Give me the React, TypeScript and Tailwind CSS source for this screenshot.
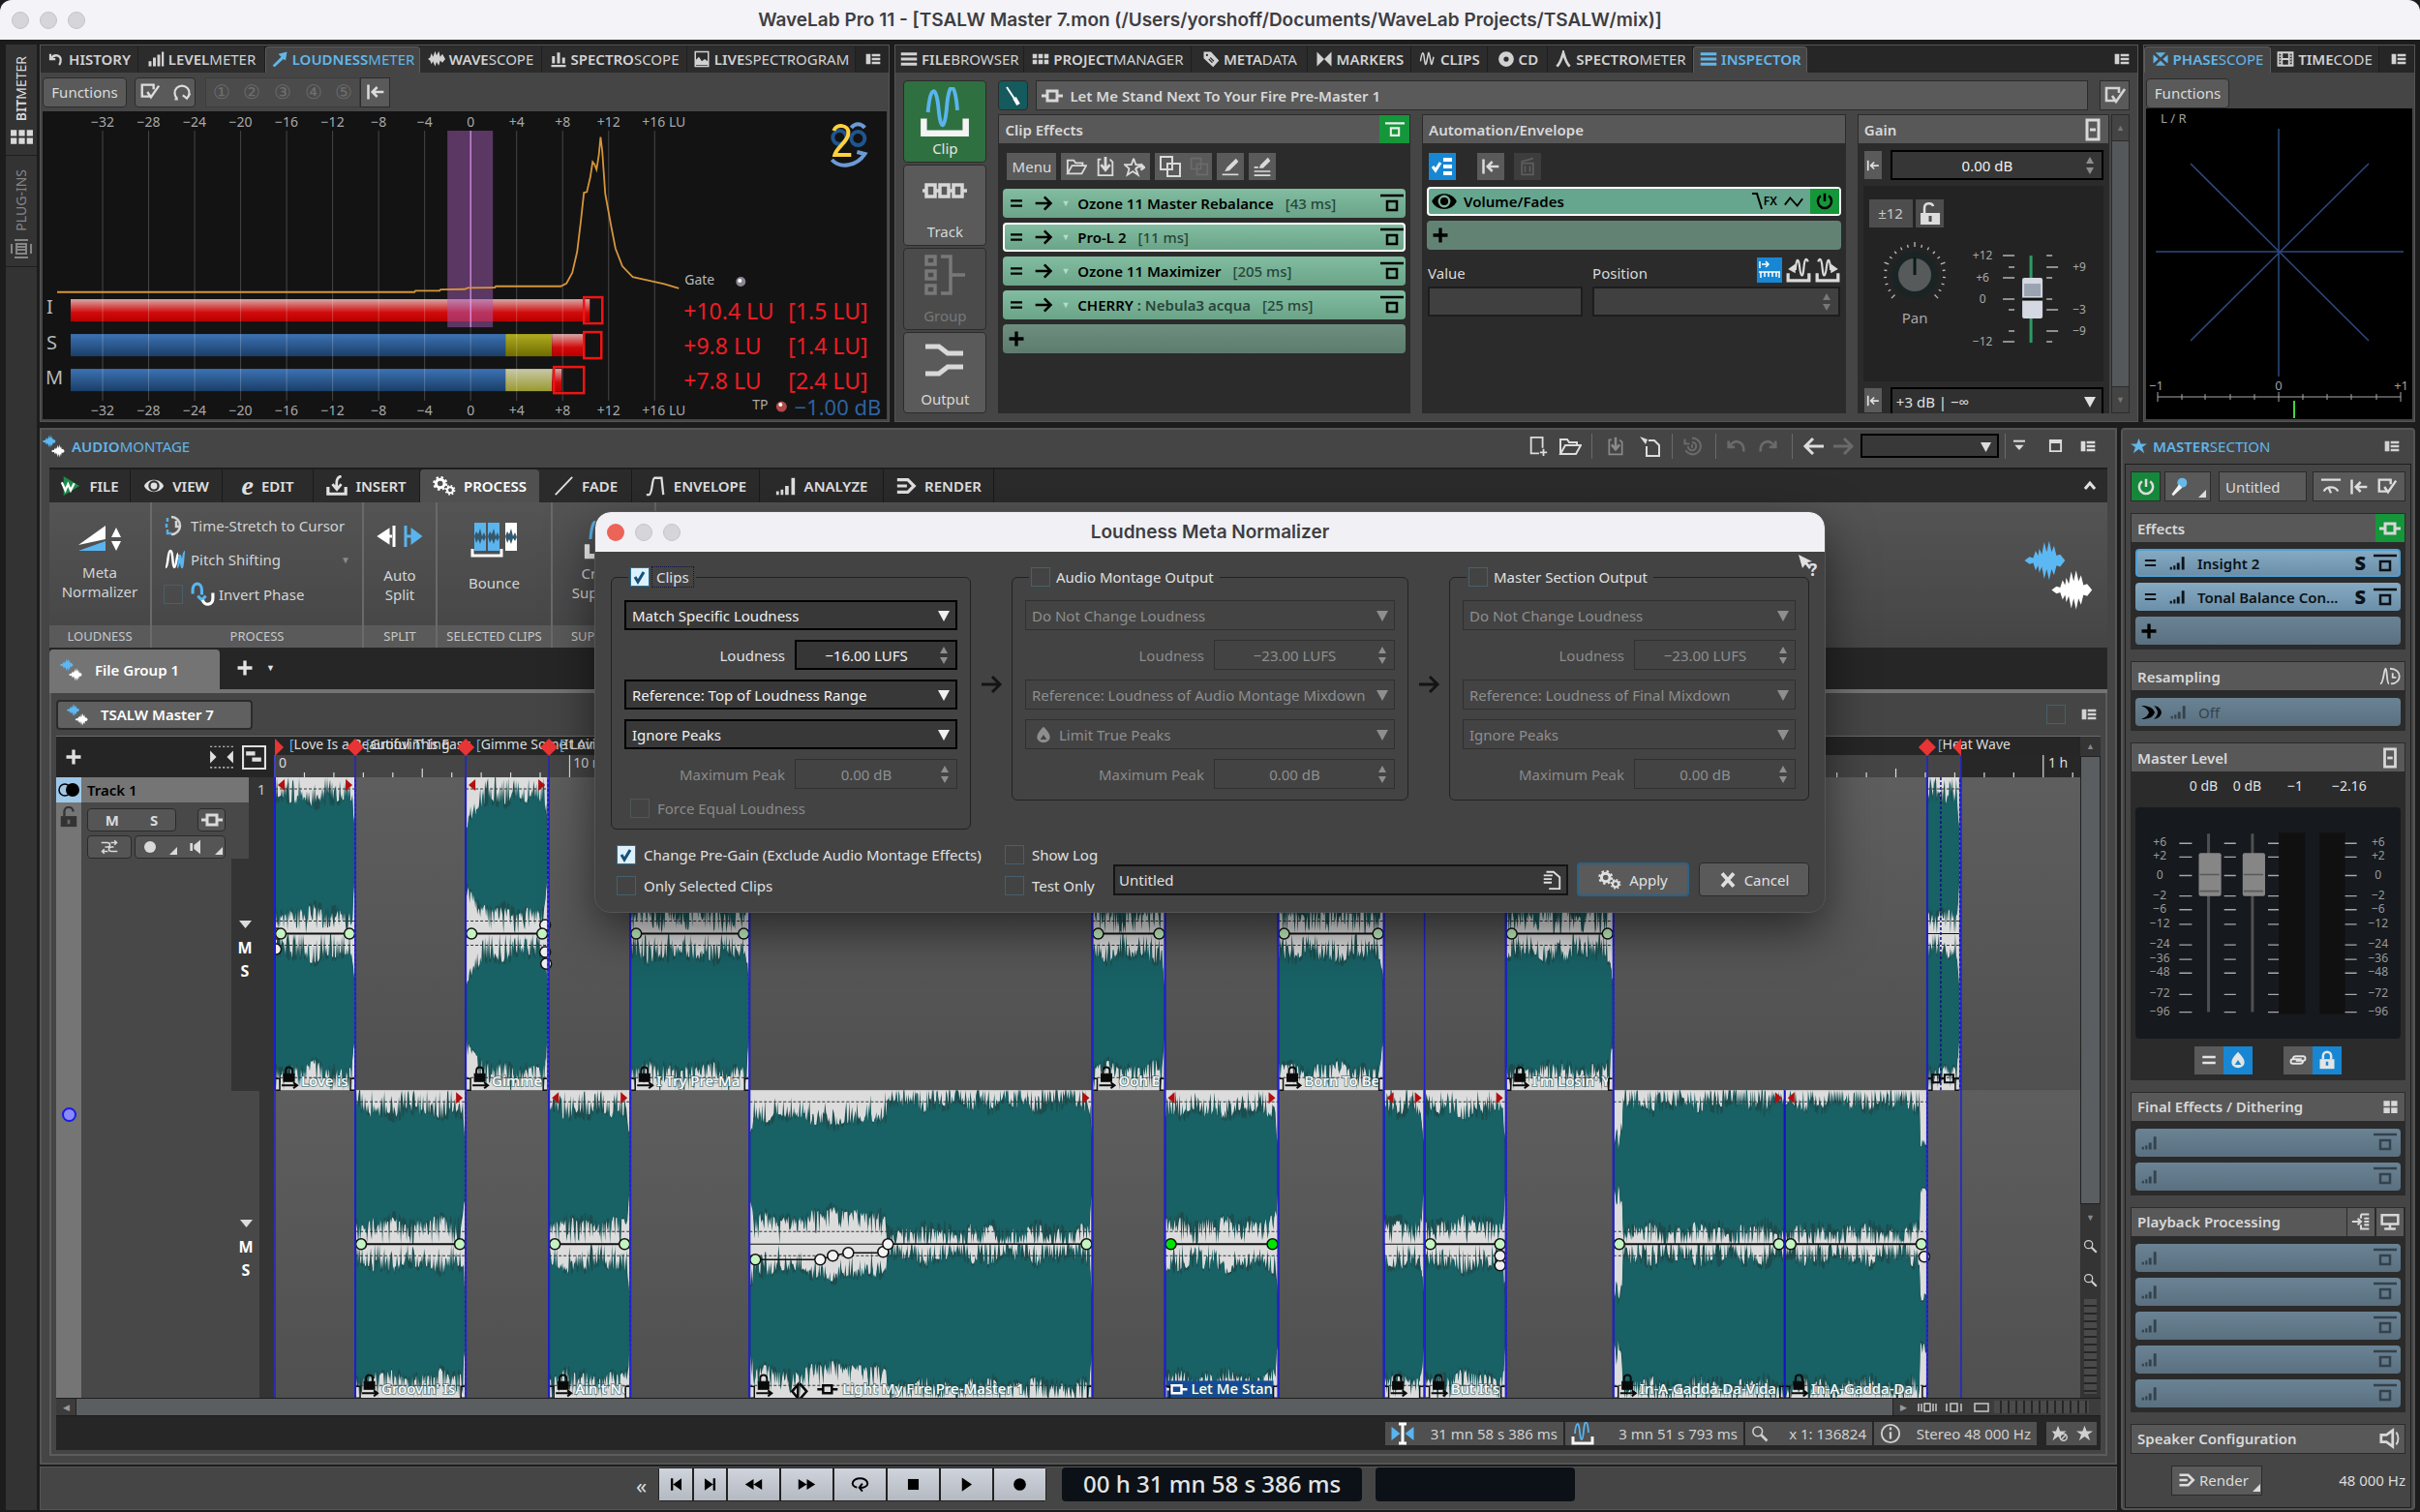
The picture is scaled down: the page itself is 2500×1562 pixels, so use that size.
import type { ReactNode } from "react"
import clsx from "clsx"
import { twMerge } from "tailwind-merge"

/* ---------- icons ---------- */

const icons: Record<string, ReactNode> = {
    undo: <path d="M4 5v7h7M5 12c4-8 15-6 13 4-.4 2-1 3-2 4" strokeWidth="3" />,
    undo2: <path d="M3 6v7h7M4 13C7 4 21 4 20 18" strokeWidth="3" />,
    redo2: <path d="M21 6v7h-7M20 13C17 4 3 4 4 18" strokeWidth="3" />,
    bars: <g fill="currentColor" stroke="none"><path d="M2 15h4v7H2zM8 10h4v12H8zM14 6h4v16h-4zM20 2h3v20h-3z" /></g>,
    bars3: <g fill="currentColor" stroke="none"><path d="M3 8h4v10H3zM10 3h4v15h-4zM17 10h4v8h-4zM2 20h20v3H2z" /></g>,
    arrowNE: <g fill="currentColor" stroke="none"><path d="M2 21 14 9l-4-4L22 2l-2 12-3-2L5 23z" /></g>,
    wave: <g fill="currentColor" stroke="none"><path d="M0 12l3-2 2-6 2 5 3-8 2 6 3-6 2 8 3-4 4 7-4 5-3-3-2 7-3-5-2 6-3-7-2 4-2-5z" /></g>,
    picture: <g><path d="M3 2h18v20H3z" /><path d="M4 20v-7l4-4 4 6 4-3 4 3v5z" fill="currentColor" stroke="none" /></g>,
    layout: <g fill="currentColor" stroke="none"><path d="M1 4h7v16H1zM10 4h13v4H10zM10 10h13v4H10zM10 16h13v4H10z" /></g>,
    menu: <g fill="currentColor" stroke="none"><path d="M1 3h22v4H1zM1 10h22v4H1zM1 17h22v4H1z" /></g>,
    grid: <g fill="currentColor" stroke="none"><path d="M1 5h6v6H1zM9 5h6v6H9zM17 5h6v6h-6zM1 13h6v6H1zM9 13h6v6H9zM17 13h6v6h-6z" /></g>,
    grid4: <g fill="currentColor" stroke="none"><path d="M2 3h9v8H2zM13 3h9v8h-9zM2 13h9v8H2zM13 13h9v8h-9z" /></g>,
    tag: <g><path d="M2 2h10l11 12-8 9L2 11z" fill="currentColor" stroke="none" /><circle cx="6.500" cy="6.500" r="1.500" fill="#2b2b2b" stroke="none" /><path d="M11 10l5 5M9 12l5 5" stroke="#2b2b2b" strokeWidth="1.500" /></g>,
    bowtie: <g fill="currentColor" stroke="none"><path d="M2 2l10 10L2 22zM22 2L12 12l10 10z" /></g>,
    squiggle: <path d="M2 15c2-14 4-14 5-5s2 14 4 3 2-14 4-3 2 14 5-1" />,
    disc: <g><circle cx="12" cy="12" r="7" strokeWidth="7" /></g>,
    peak: <path d="M3 22C8 18 10 10 12 3c2 7 4 15 9 19" strokeWidth="3.500" />,
    check: <path d="M13 17H3V4h13v5M9 12l4 6L22 5" strokeWidth="2.600" />,
    rotate: <path d="M7 21H3M6 20a9 9 0 1 1 12 0M22 14l-4 6-5-4" strokeWidth="2.600" />,
    toStart: <path d="M3 3v18M22 12H8M14 6l-6 6 6 6" strokeWidth="3" />,
    scope: <g fill="currentColor" stroke="none"><path d="M5 3h14l-7 7zM5 21h14l-7-7z" opacity=".95" /><path d="M2 6l7 6-7 6zM22 6l-7 6 7 6z" /></g>,
    film: <g><path d="M2 3h20v18H2zM7 3v18M17 3v18M7 12h10" strokeWidth="2.500" /><path d="M4.500 3v18M19.500 3v18" strokeDasharray="2 2" /></g>,
    power: <path d="M12 2v10M7 5a8.500 8.500 0 1 0 10 0" strokeWidth="3" />,
    star: <path d="M12 1l3 8h9l-7 5 3 9-8-6-8 6 3-9-7-5h9z" fill="currentColor" stroke="none" />,
    starOff: <g><path d="M10 1l3 8h9l-7 5 3 9-8-6-8 6 3-9-4-5h6z" fill="currentColor" stroke="none" /><circle cx="18" cy="18" r="5" fill="#505050" /><path d="M14.500 21.500l7-7" /></g>,
    starLine: <g><path d="M11 3l2.500 7H19M14 16l2 5.500-6-4-6 4 2-7L1 10h7.500L11 3" /><path d="M13 16c1-4 5-5 9-3M19 9l4 4-4 3" strokeWidth="2.500" /></g>,
    folder: <path d="M2 20V5h7l2 3h8v4M2 20l5-9h16l-5 9z" />,
    save: <g><path d="M7 4H4v18h16V7l-3-3" /><path d="M12 1v13M7 10l5 6 5-6" strokeWidth="3" /></g>,
    saveAs: <g><path d="M10 6h6l5 5v11H8V12" /><path d="M1 2l8 3-2 5z" fill="currentColor" stroke="none" /></g>,
    copy: <path d="M2 2h12v13H2zM9 9h13v13H9z" />,
    eraser: <g><path d="M2 22h20" /><path d="M5 18l3-5 11-11 3 4L11 17z" fill="currentColor" stroke="none" /></g>,
    eraser2: <g><path d="M2 18h20M2 23h20M2 13h5" /><path d="M8 14l2-4 9-9 3 4-9 9z" fill="currentColor" stroke="none" /></g>,
    fxChain: <path d="M1 12h6M17 12h6M7 7h10v10H7z" strokeWidth="3" />,
    list: <g><path d="M13 5h9M13 12h9M13 19h9" strokeWidth="4" /><path d="M2 12l3 4 5-8" strokeWidth="3" /></g>,
    trash: <path d="M5 8h14v14H5zM9 11v8M15 11v8M4 6l15-4" />,
    eye: <g><path d="M1 12C5 3 19 3 23 12 19 21 5 21 1 12z" fill="currentColor" stroke="none" /><circle cx="12" cy="12" r="4.500" stroke="#7fae98" strokeWidth="2" fill="currentColor" /></g>,
    eyeLine: <g><path d="M1 12C5 3 19 3 23 12 19 21 5 21 1 12z" fill="currentColor" stroke="none" /><circle cx="12" cy="12" r="5" fill="currentColor" stroke="#303030" strokeWidth="2.500" /></g>,
    zig: <path d="M2 16l6-8 8 9 6-8" />,
    lock: <g><path d="M3 11h18v12H3z" fill="currentColor" stroke="none" /><path d="M7 11V7a5 5 0 0 1 10 0v4" strokeWidth="3" /><path d="M12 14v5" stroke="#1787d4" strokeWidth="3" /></g>,
    unlock: <g><path d="M3 11h18v12H3z" fill="currentColor" stroke="none" /><path d="M7 11V6a5 5 0 0 1 10 0" strokeWidth="2.500" /><path d="M12 15v5" stroke="#6a6a6a" strokeWidth="3" /></g>,
    box: <g><path d="M6 2h12v20H6z" strokeWidth="3" /><path d="M9 12h6" strokeWidth="3" /></g>,
    plus: <path d="M12 3v18M3 12h18" strokeWidth="4" />,
    eq: <path d="M3 8h18M3 16h18" strokeWidth="3.500" />,
    arrow: <path d="M2 12h19M13 4l8 8-8 8" strokeWidth="3" />,
    back: <path d="M22 12H3M11 4l-8 8 8 8" strokeWidth="3" />,
    filePlus: <path d="M13 20H4V2h13v12M18 15v8M14 19h8" />,
    snap: <path d="M12 7a5 5 0 1 1-5 5M12 2a10 10 0 1 1-8 15M3 3v6h6M12 10v4" strokeWidth="2.500" />,
    downBar: <g><path d="M3 4h18" strokeWidth="3" /><path d="M5 10h14l-7 8z" fill="currentColor" stroke="none" /></g>,
    win: <g><path d="M3 3h18v18H3z" strokeWidth="3" /><path d="M3 5h18" strokeWidth="6" /></g>,
    insert: <g><path d="M2 13v8h20v-8" strokeWidth="3.500" /><path d="M17 1c-5 1-6 5-5 14M7 10l5 6 5-6" strokeWidth="3" /></g>,
    waveTray: <g><path d="M2 15v7h20v-7" strokeWidth="3" /><path d="M9 12c1-12 3-12 4-3s3 12 4 1 3-9 4-6" /><path d="M9 6v9l-7-4z" fill="currentColor" stroke="none" /></g>,
    slash: <path d="M3 22L22 2" strokeWidth="2" />,
    env: <path d="M2 22h3C9 20 8 4 11 3h8l2 19" strokeWidth="2.500" />,
    render: <path d="M2 5h12l7 7-7 7H2M2 12h11" strokeWidth="3.500" />,
    levels: <g fill="currentColor" stroke="none"><path d="M1 18h3v4H1zM6 16h3v6H6zM11 12h4v10h-4zM18 3h4v19h-4z" /></g>,
    drop: <path d="M12 2c5 5 8 9 8 13a8 7 0 0 1-16 0c0-4 3-8 8-13zm0 10l-4 6h8z" fill="currentColor" stroke="none" fillRule="evenodd" />,
    link: <path d="M9 17H5a3 3 0 0 1 0-6h12M15 7h4a3 3 0 0 1 0 6H9M5 11c0-3 2-4 4-4h7M19 13c0 3-2 4-4 4H9" strokeWidth="2.500" />,
    speaker: <g><path d="M2 8h6l7-5v18l-7-5H2z" strokeWidth="3" /><path d="M19 5c3 4 3 10 0 14" /></g>,
    horn: <g fill="currentColor" stroke="none"><path d="M2 6h4v12H2zM8 9l10-8v22L8 15z" /></g>,
    weave: <path d="M1 6h8c5 0 5 6 0 6H6M23 18h-8c-5 0-5-6 0-6h3M14 6h8M19 3l3 3-3 3M10 18H2M5 15l-3 3 3 3" />,
    screen: <path d="M2 4h20v11H2zM12 15v6M5 21h14" strokeWidth="3" />,
    route: <path d="M1 12h11M8 8l4 4-4 4M12 3h10M12 3v5M12 16v5h10M16 8h6M16 12h6M16 16h6" strokeWidth="2.500" />,
    search: <g><circle cx="9" cy="9" r="6.500" /><path d="M14 14l8 8" strokeWidth="3.500" /></g>,
    info: <g><circle cx="12" cy="12" r="10" /><path d="M12 10v8M12 5v3" strokeWidth="2.500" /></g>,
    cross: <path d="M4 3l16 18M20 3L4 21" strokeWidth="5" />,
    page: <path d="M6 3h8l7 6v13H9M3 7h10M3 11h9M3 15h9" />,
    rewind: <path d="M12 5v14L1 12zM23 5v14l-11-7z" fill="currentColor" stroke="none" />,
    forward: <path d="M1 5v14l11-7zM12 5v14l11-7z" fill="currentColor" stroke="none" />,
    first: <path d="M5 4h3v16H5zM19 4v16L8 12z" fill="currentColor" stroke="none" />,
    last: <path d="M16 4h3v16h-3zM5 4v16l11-8z" fill="currentColor" stroke="none" />,
    loop: <path d="M8 16C-2 14 2 4 12 4s14 10 4 12h-5M15 11l-4 5 4 5" strokeWidth="2.500" />,
    stop: <path d="M5 5h14v14H5z" fill="currentColor" stroke="none" />,
    play: <path d="M6 3v18l13-9z" fill="currentColor" stroke="none" />,
    rec: <circle cx="12" cy="12" r="8" fill="currentColor" stroke="none" />,
    clock: <g><path d="M8 3a9 9 0 1 1 0 18" strokeWidth="2.500" /><path d="M13 7v6h5" strokeWidth="2.500" /><path d="M4 4v4M3 10v4M4 16v4h4" stroke="#5aaee0" strokeWidth="2.500" /></g>,
    resample: <g><path d="M1 20c4 0 4-17 6-17s1 17 4 17" /><path d="M12 3c14 0 14 17 1 17M15 8v5h4" /></g>,
    bend: <path d="M2 5c8 0 12 2 14 7-2 5-6 7-14 7 5-2 7-4 8-7-1-3-3-5-8-7zM15 5c5 1 7 3 8 7-1 4-3 6-8 7 3-3 4-5 4-7s-1-4-4-7z" fill="currentColor" stroke="none" />,
    mic: <g><circle cx="16" cy="7" r="6" fill="#6ab8e8" stroke="none" /><path d="M12 9L3 21l2 2 11-10z" fill="#f4f4f4" stroke="none" /></g>,
    dial: <path d="M1 4h22M4 17c3-6 13-6 16 0M12 19l-3-7" strokeWidth="2.500" />,
    meta: <g stroke="none"><path d="M1 15L15 5v7z" fill="#fff" /><path d="M1 18l14-5v5z" fill="#5ab4ee" /><path d="M18 11l2.500-5 2.500 5zM18 13h5l-2.500 5z" fill="#fff" /></g>,
    tagClip: <g><path d="M2 15v7h20v-7" stroke="#f4f4f4" strokeWidth="3" /><path d="M4 12c1-13 4-13 5-2s3 11 4-1 4-12 5 2" stroke="#5ab4ee" strokeWidth="1.800" /></g>,
}

const Ic = ({ n, className = "size-5" }: { n: string, className?: string }) => (
    <svg viewBox="0 0 24 24" fill="none" stroke="currentColor" strokeWidth="2" className={clsx("shrink-0", className)} aria-hidden="true">
        {icons[n]}
    </svg>
)

const Rack = ({ className = "w-[24px]" }: { className?: string }) => (
    <svg viewBox="0 0 24 20" className={clsx("h-[20px] shrink-0", className)} fill="none" stroke="currentColor" strokeWidth="2.500" aria-hidden="true">
        <path d="M0 2h24M7 8h10v9H7z" />
    </svg>
)

const Gears = ({ className }: { className: string }) => (
    <svg viewBox="0 0 28 24" className={className} fill="none" stroke="currentColor" aria-hidden="true">
        <circle cx="9" cy="9" r="5" strokeWidth="3.500" />
        <circle cx="9" cy="9" r="7.500" strokeWidth="2.500" strokeDasharray="2.900 3" />
        <circle cx="21" cy="17" r="3.500" strokeWidth="2.500" />
        <circle cx="21" cy="17" r="5.300" strokeWidth="2" strokeDasharray="2 2.160" />
    </svg>
)

const blip = "M0 16l4-3 3 1 2-6 2 4 1-6 2 5 2-10 2 8 2-9 2 9 2-5 2 8 3-1 4 5-4 5-3-1-2 8-2-5-2 9-2-9-2 8-2-10-2 5-1-6-2 4-2-6-3 1z"

const Blips = ({ className }: { className: string }) => (
    <svg viewBox="0 0 60 60" className={className} aria-hidden="true">
        <path d={blip} transform="translate(2 3)" fill="#5cb8f2" />
        <path d={blip} transform="translate(24 27)" fill="#fff" />
    </svg>
)

const UpDown = () => (
    <svg viewBox="0 0 8 18" className="h-[18px] w-2 shrink-0" fill="currentColor" aria-hidden="true"><path d="M0 7l4-7 4 7zM0 11h8l-4 7z" /></svg>
)

const Corner = () => (
    <svg viewBox="0 0 8 8" className="mb-[3px] size-2 shrink-0 self-end" fill="currentColor" aria-hidden="true"><path d="M8 0v8H0z" /></svg>
)

/* ---------- small controls ---------- */

const Check = ({ checked, off }: { checked?: boolean, off?: boolean }) => (
    <span className="relative inline-flex size-5 shrink-0">
        <input
            type="checkbox"
            defaultChecked={checked}
            disabled={off}
            className={clsx("size-5 appearance-none border checked:border-[#2d6f96] checked:bg-[#dcf1fb]", off ? "border-[#505659]" : "border-[#46606b]")}
        />
        {checked && (
            <svg viewBox="0 0 20 20" className="pointer-events-none absolute inset-0 size-5" fill="none" stroke="#16507a" strokeWidth="3">
                <path d="M5 10l3 5 6-10" />
            </svg>
        )}
    </span>
)

const CheckLabel = ({ text, checked, off, className }: { text: string, checked?: boolean, off?: boolean, className?: string }) => (
    <label className={clsx("flex items-center gap-2 whitespace-nowrap", off && "text-[#8a8a8a]", className)}>
        <Check checked={checked} off={off} />
        {text}
    </label>
)

const Pick = ({ value, label, off, icon }: { value: string, label: string, off?: boolean, icon?: string }) => (
    <div className={clsx("relative flex h-[31px] items-center", off ? "border border-[#303030] text-[#8e8e8e]" : "border-2 border-black bg-[#383838] text-[#f0f0f0]")}>
        {icon && <Ic n={icon} className="ml-2 size-5" />}
        <select aria-label={label} disabled={off} className="h-full w-full appearance-none bg-transparent px-1.5 opacity-100">
            <option>{value}</option>
        </select>
        <svg viewBox="0 0 12 12" className="pointer-events-none absolute right-1.5 size-3" fill="currentColor"><path d="M0 1h12L6 12z" /></svg>
    </div>
)

const Spin = ({ value, label, off, className }: { value: string, label: string, off?: boolean, className: string }) => (
    <div className={clsx("flex h-[31px] items-center pr-2", className, off ? "border border-[#303030] text-[#8e8e8e]" : "border-2 border-black bg-[#363636] text-[#f0f0f0]")}>
        <input aria-label={label} defaultValue={value} disabled={off} className="w-0 flex-1 bg-transparent pr-1 text-center" />
        <span className="text-[#8e8e8e]"><UpDown /></span>
    </div>
)

const Btn = ({ label, children, className }: { label?: string, children: ReactNode, className?: string }) => (
    <button type="button" aria-label={label} className={twMerge("flex items-center justify-center border border-[#2b2b2b] bg-[#5a5a5a]", className)}>
        {children}
    </button>
)

type Tab = { icon: string, bold: string, thin?: string, w: string, on?: boolean }

const Tabs = ({ tabs }: { tabs: Tab[] }) => (
    <div className="flex h-[28px] items-end bg-[#262626]">
        {tabs.map((t) => (
            <button
                key={t.bold}
                type="button"
                className={clsx(
                    "flex h-[27px] shrink-0 items-center justify-center gap-1 pb-0.5 whitespace-nowrap text-[15px]",
                    t.w,
                    t.on ? "rounded-t border border-b-0 border-[#5c5c5c] bg-[#454545] text-[#62b6ea]" : "border-r border-[#1e1e1e] bg-[#2c2c2c] text-[#d2d2d2]",
                )}
            >
                <Ic n={t.icon} className="size-[18px]" />
                <span><b className="font-semibold">{t.bold}</b>{t.thin}</span>
            </button>
        ))}
        <span className="ml-auto self-center pr-2 text-[#d2d2d2]"><Ic n="layout" className="size-4" /></span>
    </div>
)

const leftTabs: Tab[] = [
    { icon: "undo", bold: "HISTORY", w: "w-[101px]" },
    { icon: "bars", bold: "LEVEL", thin: "METER", w: "w-[131px]" },
    { icon: "arrowNE", bold: "LOUDNESS", thin: "METER", w: "w-[160px]", on: true },
    { icon: "wave", bold: "WAVE", thin: "SCOPE", w: "w-[126px]" },
    { icon: "bars3", bold: "SPECTRO", thin: "SCOPE", w: "w-[150px]" },
    { icon: "picture", bold: "LIVE", thin: "SPECTROGRAM", w: "w-[174px]" },
]

const midTabs: Tab[] = [
    { icon: "menu", bold: "FILE", thin: "BROWSER", w: "w-[133px]" },
    { icon: "grid", bold: "PROJECT", thin: "MANAGER", w: "w-[173px]" },
    { icon: "tag", bold: "META", thin: "DATA", w: "w-[120px]" },
    { icon: "bowtie", bold: "MARKERS", w: "w-[107px]" },
    { icon: "squiggle", bold: "CLIPS", w: "w-[79px]" },
    { icon: "disc", bold: "CD", w: "w-[62px]" },
    { icon: "peak", bold: "SPECTRO", thin: "METER", w: "w-[150px]" },
    { icon: "menu", bold: "INSPECTOR", w: "w-[118px]", on: true },
]

/* ---------- loudness meter ---------- */

const luMarks = ["−32", "−28", "−24", "−20", "−16", "−12", "−8", "−4", "0", "+4", "+8", "+12", "+16 LU"]
const luX = (i: number) => 62 + i * 47.5

const LoudnessGraph = () => (
    <svg viewBox="0 0 872 318" className="w-full bg-[#131313]" fontSize="14">
        <defs>
            <linearGradient id="red" x1="0" y1="0" x2="0" y2="1"><stop offset="0" stopColor="#d8a8a8" /><stop offset=".6" stopColor="#d20a0a" /><stop offset="1" stopColor="#b80000" /></linearGradient>
            <linearGradient id="blue" x1="0" y1="0" x2="0" y2="1"><stop offset="0" stopColor="#3d73b4" /><stop offset="1" stopColor="#1a3e68" /></linearGradient>
            <linearGradient id="olive" x1="0" y1="0" x2="0" y2="1"><stop offset="0" stopColor="#b0ac20" /><stop offset="1" stopColor="#6f6c00" /></linearGradient>
            <linearGradient id="pale" x1="0" y1="0" x2="0" y2="1"><stop offset="0" stopColor="#c8c8a8" /><stop offset="1" stopColor="#9a9a30" /></linearGradient>
        </defs>
        <rect x="29" y="194" width="536" height="23" fill="url(#red)" />
        <rect x="29" y="230" width="449" height="23" fill="url(#blue)" />
        <rect x="478" y="230" width="48" height="23" fill="url(#olive)" />
        <rect x="526" y="230" width="33" height="23" fill="url(#red)" />
        <rect x="29" y="266" width="449" height="23" fill="url(#blue)" />
        <rect x="478" y="266" width="48" height="23" fill="url(#pale)" />
        <rect x="526" y="266" width="10" height="23" fill="url(#red)" />
        {luMarks.map((m, i) => (
            <g key={m} fill="#a8a8a8" textAnchor={i === 12 ? "start" : "middle"}>
                <line x1={luX(i)} x2={luX(i)} y1="20" y2="299" stroke="#fff" strokeOpacity=".22" />
                <text x={i === 12 ? 619 : luX(i)} y="16">{m}</text>
                <text x={i === 12 ? 619 : luX(i)} y="314">{m}</text>
            </g>
        ))}
        <rect x="418" y="20" width="47" height="203" fill="#a35cb4" fillOpacity=".5" />
        <line x1="442" x2="442" y1="20" y2="223" stroke="#f0a0ff" />
        <polyline
            fill="none"
            stroke="#d6953a"
            strokeWidth="1.800"
            points="15,186.700 384,186.700 385,185.300 410,185.300 411,184 436,183.700 439,182.300 467,182 468,180.700 535,180.700 541,177.700 547,166.700 552,145 556,111.700 559,84 562,83.300 565.500,68.300 568,52.300 570,55 572,60 574.400,45 576.200,26.700 578,41.700 581,85 587,118 591.600,141.700 598.700,160 609.400,171 624,174.300 642,178.300 657,182.700"
        />
        <g fill="none" stroke="#f01414" strokeWidth="2.500">
            <rect x="559" y="192" width="19" height="27" />
            <rect x="559" y="228" width="18" height="27" />
            <rect x="528" y="264" width="31" height="27" />
        </g>
        <g fill="#b8b8b8" fontSize="20">
            <text x="4" y="209">I</text><text x="4" y="246">S</text><text x="3" y="282">M</text>
        </g>
        <text x="663" y="179" fill="#b8b8b8">Gate</text>
        <circle cx="721" cy="176" r="5" fill="#8a8590" /><circle cx="720" cy="175" r="2" fill="#fff" />
        <g fill="#ee1c24" fontSize="23">
            <text x="662" y="215">+10.4 LU</text><text x="770" y="215">[1.5 LU]</text>
            <text x="662" y="251">+9.8 LU</text><text x="770" y="251">[1.4 LU]</text>
            <text x="662" y="287">+7.8 LU</text><text x="770" y="287">[2.4 LU]</text>
        </g>
        <text x="733" y="308" fill="#a8a8a8">TP</text>
        <circle cx="763" cy="305" r="5.500" fill="#b04848" /><circle cx="762" cy="303" r="2" fill="#fff" />
        <text x="866" y="314" fill="#2f62a0" fontSize="22" textAnchor="end">−1.00 dB</text>
        <g fill="none" strokeWidth="4">
            <circle cx="823" cy="27" r="7" stroke="#1f5590" /><circle cx="842" cy="28" r="7" stroke="#1f5590" />
            <path d="M835 17c4-5 10-5 14 0M815 50c9 10 26 6 34-6l-8-2" stroke="#6c9ad6" />
            <path d="M817 20c2-7 16-7 15 3 0 8-12 14-14 22h17" stroke="#ffd23c" />
        </g>
    </svg>
)

/* ---------- inspector ---------- */

const modes = [
    { name: "Clip", icon: "tagClip", on: true },
    { name: "Track", icon: "track" },
    { name: "Group", icon: "group", off: true },
    { name: "Output", icon: "output" },
]

const ModeArt = ({ n }: { n: string }) => {
    if (n === "tagClip") return <Ic n="tagClip" className="size-[52px]" />
    return (
        <svg viewBox="0 0 48 48" className="size-12" fill="none" stroke="currentColor" strokeWidth="3.500" aria-hidden="true">
            {n === "track" && <path d="M1 20h4M15 20h4M29 20h4M43 20h4M5 14h9v12H5zM19 14h9v12h-9zM33 14h9v12h-9z" />}
            {n === "group" && <path d="M5 2h9v8H5zM5 17h9v8H5zM5 32h9v8H5zM20 2h10v38H20M30 21h15" />}
            {n === "output" && <path d="M4 8h14l9 7h16M4 36h14l9-7h16" strokeWidth="5" />}
        </svg>
    )
}

const effects = [
    { name: "Ozone 11 Master Rebalance", ms: "[43 ms]" },
    { name: "Pro-L 2", ms: "[11 ms]", on: true },
    { name: "Ozone 11 Maximizer", ms: "[205 ms]" },
    { name: "CHERRY", sub: " : Nebula3 acqua", ms: "[25 ms]" },
]

const PanelHead = ({ title, children }: { title: string, children?: ReactNode }) => (
    <div className="flex h-[31px] items-center justify-between border border-[#2b2b2b] bg-[#585858] pl-1.5 font-semibold text-[#d8d8d8]">
        <h2>{title}</h2>
        {children}
    </div>
)

const Inspector = () => (
    <section className="flex min-w-0 flex-[1285] flex-col border border-[#555] bg-[#454545]">
        <Tabs tabs={midTabs} />
        <div className="flex flex-1 gap-3 p-2">
            <nav className="flex w-[86px] flex-col gap-[2px]">
                {modes.map((m) => (
                    <button
                        key={m.name}
                        type="button"
                        className={clsx(
                            "flex flex-1 flex-col items-center justify-between rounded-sm border border-[#2b2b2b] px-1 pt-1.5 pb-1",
                            m.on ? "bg-[#2f7040] text-[#e4e4e4]" : m.off ? "bg-[#4b4b4b] text-[#787878]" : "bg-[#5a5a5a] text-[#d8d8d8]",
                        )}
                    >
                        <ModeArt n={m.icon} />
                        {m.name}
                    </button>
                ))}
            </nav>
            <div className="flex min-w-0 flex-1 flex-col gap-1">
                <div className="flex h-[31px] gap-2">
                    <Btn label="Plug-in chain" className="w-[31px] rounded bg-[#155a5c] text-white">
                        <svg viewBox="0 0 24 24" className="size-6" stroke="#fff" strokeWidth="2"><path d="M5 3l8 12" /><path d="M13 14l4 7" strokeWidth="4" /></svg>
                    </Btn>
                    <div className="flex flex-1 items-center gap-1.5 border border-[#2b2b2b] bg-[#5a5a5a] px-1 font-semibold text-[#d8d8d8]">
                        <Ic n="fxChain" className="size-6" />
                        Let Me Stand Next To Your Fire Pre-Master 1
                    </div>
                    <Btn label="Options" className="ml-1 w-[31px]"><Ic n="check" className="size-6" /></Btn>
                </div>
                <div className="flex flex-1 gap-3">
                    <div className="flex flex-[424] flex-col bg-[#2b2b2b]">
                        <PanelHead title="Clip Effects">
                            <button type="button" aria-label="Effects on" className="flex h-full w-[31px] items-center justify-center bg-[#15963a] text-[#e8f0e8]"><Rack className="w-[20px]" /></button>
                        </PanelHead>
                        <div className="mt-2 flex h-[30px] gap-[3px] px-2 text-[#dadada]">
                            <Btn className="w-[53px]">Menu</Btn>
                            <Btn label="Presets" className="w-[94px] gap-2"><Ic n="folder" className="size-[22px]" /><Ic n="save" className="size-[22px]" /><Ic n="starLine" className="size-[22px]" /></Btn>
                            <Btn label="Copy" className="w-[61px] gap-2"><Ic n="copy" className="size-6" /><Ic n="copy" className="size-5 text-[#6b6b6b]" /></Btn>
                            <Btn label="Clear" className="w-[30px]"><Ic n="eraser" /></Btn>
                            <Btn label="Clear all" className="w-[30px]"><Ic n="eraser2" /></Btn>
                        </div>
                        <ul className="mt-2 flex flex-col gap-[5px] px-[5px]">
                            {effects.map((e) => (
                                <li
                                    key={e.name}
                                    className={clsx("flex h-[30px] items-center rounded-sm bg-gradient-to-b from-[#82bda1] to-[#6ba488] text-black", e.on ? "border-2 border-white px-1" : "px-1.5")}
                                >
                                    <Ic n="eq" className="size-4" />
                                    <Ic n="arrow" className="ml-2.5 size-[20px]" />
                                    <span className="mx-2 text-[9px] text-[#b4dcc8]">▼</span>
                                    <span className="font-semibold">{e.name}<span className="text-[#27463a]">{e.sub}</span></span>
                                    <span className="ml-3 font-medium text-[#27463a]">{e.ms}</span>
                                    <span className="-mr-1 ml-auto"><Rack /></span>
                                </li>
                            ))}
                            <li className="flex h-[30px] items-center rounded-sm bg-gradient-to-b from-[#6d8f80] to-[#5d7c6e] px-1 text-black"><Ic n="plus" className="size-[20px]" /></li>
                        </ul>
                    </div>
                    <div className="flex flex-[436] flex-col bg-[#2b2b2b]">
                        <PanelHead title="Automation/Envelope" />
                        <div className="mt-2 flex h-[30px] px-1.5">
                            <Btn label="List" className="w-[30px] bg-[#1787d4] text-white"><Ic n="list" className="size-6" /></Btn>
                            <Btn label="Reset" className="ml-5 w-[30px] text-[#dadada]"><Ic n="toStart" /></Btn>
                            <Btn label="Delete" className="ml-2 w-[30px] bg-[#3d3d3d] text-[#5e5e5e]"><Ic n="trash" /></Btn>
                        </div>
                        <div className="mx-[5px] mt-1.5 flex h-[30px] items-center gap-1.5 rounded-sm border-2 border-white bg-[#66a68e] pl-0.5 font-semibold text-black">
                            <Ic n="eye" className="size-7" />
                            Volume/Fades
                            <span className="ml-auto flex items-center text-[12px]">
                                <svg viewBox="0 0 12 20" className="h-5 w-3" fill="none" stroke="currentColor" strokeWidth="2"><path d="M0 2h5l5 16" /></svg>
                                FX
                            </span>
                            <Ic n="zig" className="size-[22px]" />
                            <button type="button" aria-label="Envelope on" className="flex h-full w-[30px] items-center justify-center bg-[#15963a]"><Ic n="power" /></button>
                        </div>
                        <div className="mx-[5px] mt-[5px] flex h-[30px] items-center rounded-sm bg-[#628374] px-1 text-black"><Ic n="plus" /></div>
                        <div className="mt-2 flex h-[26px] gap-[10px] px-1.5 text-[#dadada]">
                            <label htmlFor="env-value" className="w-[160px] self-end">Value</label>
                            <label htmlFor="env-pos" className="flex-1 self-end">Position</label>
                            <span className="flex gap-1">
                                <svg viewBox="0 0 26 26" className="size-[26px] bg-[#1787d4]" stroke="#fff" strokeWidth="2" fill="none"><path d="M3 4v7M5 7h7M9 4l3 3-3 3M2 15h22M4 15v6M8 15v5M12 15v5M16 15v5M20 15v5M23 15v6" strokeWidth="1.500" /></svg>
                                <Ic n="waveTray" className="size-[26px]" />
                                <Ic n="waveTray" className="size-[26px] -scale-x-100" />
                            </span>
                        </div>
                        <div className="mt-1 flex gap-[10px] px-1.5">
                            <input id="env-value" className="h-[31px] w-[160px] border-2 border-[#1d1d1d] bg-[#404040]" />
                            <div className="flex h-[31px] flex-1 items-center border-2 border-[#1d1d1d] bg-[#404040] pr-2 text-[#777]">
                                <input id="env-pos" className="w-0 flex-1 bg-transparent" />
                                <UpDown />
                            </div>
                        </div>
                    </div>
                    <div className="flex flex-[280] gap-[2px]">
                        <div className="flex flex-1 flex-col bg-[#2b2b2b]">
                            <PanelHead title="Gain"><Ic n="box" className="mr-1 size-6" /></PanelHead>
                            <div className="mt-1.5 flex gap-2 px-[6px] text-[#e0e0e0]">
                                <Btn label="Reset gain" className="w-[20px]"><Ic n="toStart" className="size-3.5" /></Btn>
                                <Spin value="0.00 dB" label="Gain" className="flex-1" />
                            </div>
                            <div className="m-[6px] flex-1 bg-[#232323]">
                                <GainPanel />
                            </div>
                            <div className="flex gap-2 px-[6px] text-[#e0e0e0]">
                                <Btn label="Reset pan law" className="h-[27px] w-[20px]"><Ic n="toStart" className="size-3.5" /></Btn>
                                <div className="relative flex h-[27px] flex-1 items-center border-2 border-b-0 border-black bg-[#303030]">
                                    <select aria-label="Pan law" className="w-full appearance-none px-1"><option>+3 dB | −∞</option></select>
                                    <svg viewBox="0 0 12 12" className="pointer-events-none absolute right-1.5 size-3" fill="currentColor"><path d="M0 1h12L6 12z" /></svg>
                                </div>
                            </div>
                        </div>
                        <div className="flex w-[19px] flex-col items-center justify-between border border-[#2b2b2b] bg-[#444] text-[9px] text-[#777]">
                            <span className="leading-[26px]">▲</span>
                            <span className="w-full flex-1 border-y border-[#2b2b2b] bg-[#54585a]" />
                            <span className="leading-[26px]">▼</span>
                        </div>
                    </div>
                </div>
            </div>
        </div>
    </section>
)

const GainPanel = () => (
    <svg viewBox="0 0 248 194" className="w-full" fontSize="12" fill="#a8a8a8">
        <rect x="6" y="14" width="45" height="29" fill="#4d4d4d" />
        <text x="28" y="34" fontSize="15" textAnchor="middle" fill="#c8c8c8">±12</text>
        <rect x="54" y="14" width="29" height="29" fill="#4d4d4d" />
        <path d="M59 28h20v12H59z" fill="#dcdcdc" /><path d="M63 28v-5c0-6 8-6 9-2" fill="none" stroke="#dcdcdc" strokeWidth="2.500" />
        <path d="M69 31v6" stroke="#4d4d4d" strokeWidth="3" />
        {Array.from({ length: 21 }, (_, i) => {
            const a = ((135 + i * 13.5) * Math.PI) / 180
            return <line key={i} x1={53 + Math.cos(a) * 29} y1={92 + Math.sin(a) * 29} x2={53 + Math.cos(a) * (i % 5 ? 32 : 34)} y2={92 + Math.sin(a) * (i % 5 ? 32 : 34)} stroke="#bbb" strokeWidth="1.300" />
        })}
        <circle cx="53" cy="92" r="24" fill="#1b2424" />
        <circle cx="53" cy="92" r="17" fill="#565a5a" />
        <path d="M53 92V74" stroke="#0c1a1a" strokeWidth="3" />
        <text x="53" y="142" fontSize="15" textAnchor="middle">Pan</text>
        <g textAnchor="middle">
            <text x="123" y="76">+12</text><text x="123" y="99">+6</text><text x="123" y="121">0</text><text x="123" y="165">−12</text>
            <text x="223" y="88">+9</text><text x="223" y="132">−3</text><text x="223" y="154">−9</text>
        </g>
        <path d="M144 72h12M144 95h12M144 117h12M144 161h12M150 84h6M150 128h6M150 150h6M189 84h12M189 128h12M189 150h12M189 72h6M189 95h6M189 117h6M189 161h6" stroke="#b4b4b4" strokeWidth="1.500" />
        <path d="M173 72v90" stroke="#2f9a66" strokeWidth="3" />
        <rect x="164" y="95" width="21" height="42" rx="2" fill="#d4d8e2" /><rect x="166" y="101" width="17" height="13" fill="#9aa4b0" /><path d="M164 117h21" stroke="#111" strokeWidth="3" />
    </svg>
)

/* ---------- right column ---------- */

const PhaseScope = () => (
    <section className="flex w-[281px] shrink-0 flex-col border border-[#555] bg-[#454545]">
        <Tabs
            tabs={[
                { icon: "scope", bold: "PHASE", thin: "SCOPE", w: "w-[131px]", on: true },
                { icon: "film", bold: "TIME", thin: "CODE", w: "w-[112px]" },
            ]}
        />
        <div className="p-[2px] pt-[6px]">
            <Btn className="h-[31px] w-[86px] rounded-sm pb-0.5 text-[#dcdcdc]">Functions</Btn>
            <svg viewBox="0 0 275 321" className="w-full bg-black" fontSize="13" fill="#a0a0a0">
                <text x="15" y="15">L / R</text>
                <path d="M137 21v256M10 148h256M46 57l184 183M230 57L46 240" stroke="#2c4a80" strokeWidth="1.500" />
                <path d="M12 298h251M12 293v10M37 295v6M61 295v6M87 295v6M112 295v6M137 293v10M162 295v6M187 295v6M212 295v6M238 295v6M263 293v10" stroke="#a8a8a8" strokeWidth="1" />
                <text x="3" y="291">−1</text><text x="137" y="291" textAnchor="middle">0</text><text x="271" y="291" textAnchor="end">+1</text>
                <path d="M153 302v18" stroke="#3cd83c" strokeWidth="2" />
            </svg>
        </div>
    </section>
)

const levelMarks: [string, number][] = [["+6", 36], ["+2", 50], ["0", 69], ["−2", 90], ["−6", 104], ["−12", 119], ["−24", 140], ["−36", 155], ["−48", 169], ["−72", 191], ["−96", 209]]

const MasterFaders = () => (
    <svg viewBox="0 0 272 237" className="w-full rounded bg-[#16191d]" fontSize="12" fill="#9a9a9a" textAnchor="middle">
        <rect x="147" y="26" width="27" height="186" fill="#101011" /><rect x="189" y="26" width="26" height="186" fill="#101011" />
        {levelMarks.map(([m, y]) => (
            <g key={m}>
                <text x="25" y={y + 4}>{m}</text>
                <text x="249" y={y + 4}>{m}</text>
                <path d={`M45 ${y + 1}h13M91 ${y + 1}h12M136 ${y + 1}h11M215 ${y + 1}h12`} stroke="#a8a8a8" strokeWidth="1.300" />
            </g>
        ))}
        {[75, 120].map((x) => (
            <g key={x}>
                <path d={`M${x} 27v183`} stroke="#4f4f52" strokeWidth="3" />
                <rect x={x - 10} y="47" width="23" height="44" rx="2" fill="#868686" />
                <path d={`M${x - 9} 69h20M${x - 9} 86h20`} stroke="#5a5a5a" strokeWidth="1.500" />
            </g>
        ))}
    </svg>
)

const Slot = ({ children, className }: { children: ReactNode, className?: string }) => (
    <li className={twMerge("flex h-[29px] items-center rounded-sm bg-gradient-to-b from-[#6a8394] to-[#5a7080] px-1.5 text-[#34424c]", className)}>{children}</li>
)

const EmptySlots = ({ count }: { count: number }) => (
    <ul className="flex flex-col gap-[6px] bg-[#2b2b2b] px-[5px] pt-[7px] pb-[5px]">
        {Array.from({ length: count }, (_, i) => (
            <Slot key={i}><Ic n="levels" className="size-[17px]" /><span className="-mr-0.5 ml-auto"><Rack /></span></Slot>
        ))}
    </ul>
)

const MasterSection = () => (
    <section className="flex w-[304px] shrink-0 flex-col rounded-sm border-2 border-[#555] bg-[#454545]">
        <header className="flex h-[35px] items-center gap-1.5 px-2 pb-0.5 text-[#62b6ea]">
            <Ic n="star" className="size-[17px]" />
            <h2><b className="font-semibold">MASTER</b>SECTION</h2>
            <Ic n="layout" className="mr-1.5 ml-auto size-4 text-[#d2d2d2]" />
        </header>
        <div className="mx-[2px] flex flex-1 flex-col gap-[12px] border border-[#1e1e1e] px-[5px] pt-[7px] pb-1">
            <div className="flex h-[31px] gap-1 text-[#dcdcdc]">
                <Btn label="Power" className="w-[31px] bg-[#15863a]"><Ic n="power" /></Btn>
                <Btn label="Monitor" className="w-[48px] justify-between px-1"><Ic n="mic" /><Corner /></Btn>
                <button type="button" className="ml-1 flex-1 border border-[#2b2b2b] bg-[#5a5a5a] px-1.5 text-left">Untitled</button>
                <Btn label="Tools" className="ml-0.5 w-[96px] gap-2"><Ic n="dial" className="size-[22px]" /><Ic n="toStart" /><Ic n="check" className="size-[22px]" /></Btn>
            </div>
            <div>
                <PanelHead title="Effects"><span className="flex h-full w-[30px] items-center justify-center bg-[#15963a]"><Ic n="fxChain" className="size-6" /></span></PanelHead>
                <ul className="flex flex-col gap-[6px] bg-[#2b2b2b] px-[5px] pt-[6px] pb-[5px]">
                    {["Insight 2", "Tonal Balance Con..."].map((e, i) => (
                        <Slot key={e} className={clsx("from-[#86aac2] to-[#6b8fa8] px-2 font-semibold text-[#0c1217]", i === 0 && "border-2 border-[#4f9fd4] px-1.5")}>
                            <Ic n="eq" className="size-[15px]" />
                            <Ic n="levels" className="mr-3 ml-3 size-[17px]" />
                            {e}
                            <b className="ml-auto text-[20px] leading-none font-black">S</b>
                            <span className="-mr-1 ml-2"><Rack /></span>
                        </Slot>
                    ))}
                    <Slot className="px-1 text-black"><Ic n="plus" className="size-5" /></Slot>
                </ul>
            </div>
            <div>
                <PanelHead title="Resampling"><Ic n="resample" className="mr-1 size-[22px]" /></PanelHead>
                <ul className="bg-[#2b2b2b] px-[5px] pt-[7px] pb-[5px]">
                    <Slot className="px-1"><Ic n="bend" className="size-6 text-black" /><Ic n="levels" className="mr-3 ml-2 size-[17px]" />Off</Slot>
                </ul>
            </div>
            <div>
                <PanelHead title="Master Level"><Ic n="box" className="mr-1 size-[22px]" /></PanelHead>
                <div className="flex flex-col bg-[#2b2b2b] px-[5px] pb-1.5">
                    <div className="flex h-[36px] items-start pt-1 pl-12 text-[14px] text-[#e0e0e0]">
                        <span className="w-[45px] text-center">0 dB</span><span className="w-[45px] text-center">0 dB</span><span className="w-[54px] text-center">−1</span><span className="w-[58px] text-center">−2.16</span>
                    </div>
                    <MasterFaders />
                    <div className="flex justify-center gap-8 pt-2 text-[#e4e4e4]">
                        {[["eq", "drop"], ["link", "lock"]].map(([a, b]) => (
                            <div key={a} className="flex">
                                <Btn label={a} className="h-[29px] w-[30px] border-0"><Ic n={a} className="size-[18px]" /></Btn>
                                <Btn label={b} className="h-[29px] w-[30px] border-0 bg-[#1787d4]"><Ic n={b} /></Btn>
                            </div>
                        ))}
                    </div>
                </div>
            </div>
            <div>
                <PanelHead title="Final Effects / Dithering"><Ic n="grid4" className="mr-1.5 size-[17px]" /></PanelHead>
                <EmptySlots count={2} />
            </div>
            <div>
                <PanelHead title="Playback Processing">
                    <span className="flex h-full"><Btn label="Routing" className="w-[30px] border-y-0"><Ic n="route" /></Btn><Btn label="Screen" className="w-[30px] border-y-0"><Ic n="screen" /></Btn></span>
                </PanelHead>
                <EmptySlots count={5} />
            </div>
            <PanelHead title="Speaker Configuration"><Ic n="speaker" className="mr-1 size-[22px]" /></PanelHead>
            <div className="flex h-[31px] items-center justify-between pl-[42px] text-[#dcdcdc]">
                <Btn className="h-full w-[94px] justify-between gap-1 pr-0.5 pl-1.5"><Ic n="render" className="size-[18px]" />Render<Corner /></Btn>
                <span>48 000 Hz</span>
            </div>
        </div>
    </section>
)

/* ---------- montage ---------- */

const ribbonTabs = [
    { n: "FILE", icon: "file", w: "w-[84px]" },
    { n: "VIEW", icon: "eyeLine", w: "w-[95px]" },
    { n: "EDIT", icon: "e", w: "w-[94px]" },
    { n: "INSERT", icon: "insert", w: "w-[110px]" },
    { n: "PROCESS", icon: "gears", w: "w-[123px]", on: true },
    { n: "FADE", icon: "slash", w: "w-[96px]" },
    { n: "ENVELOPE", icon: "env", w: "w-[132px]" },
    { n: "ANALYZE", icon: "levels", w: "w-[128px]" },
    { n: "RENDER", icon: "render", w: "w-[114px]" },
]

const RibbonIcon = ({ n }: { n: string }) => {
    if (n === "gears") return <Gears className="h-[22px] w-[24px]" />
    if (n === "e") return <i className="font-['Liberation_Serif',serif] text-[28px] leading-none font-bold">e</i>
    if (n === "file") {
        return (
            <svg viewBox="0 0 24 24" className="size-[22px]"><path d="M4 1l18 11L4 23z" fill="#1f8a4c" /><path d="M2 8l4 9 3-7 3 7 4-8" stroke="#fff" strokeWidth="2.500" fill="none" /></svg>
        )
    }
    return <Ic n={n} className="size-[22px]" />
}

const Group = ({ name, className, children }: { name: string, className: string, children: ReactNode }) => (
    <div className={clsx("flex shrink-0 flex-col border-r-2 border-[#6a6a6a]", className)}>
        <div className="flex flex-1 flex-col items-center justify-center">{children}</div>
        <span className="h-[23px] bg-[#5a5a5a] text-center text-[13px] leading-[23px] text-[#c8c8c8]">{name}</span>
    </div>
)

type ClipT = { x: number, w: number, name: string, lane: 0 | 1, shape?: string, dots?: boolean, sel?: boolean, arrows?: string, extra?: [number, number][] }

const clips: ClipT[] = [
    { x: 1, w: 83, name: "Love is", lane: 0, dots: true, arrows: "lr", extra: [[2, 0], [1, 16]] },
    { x: 198, w: 85, name: "Gimme", lane: 0, shape: "in", dots: true, arrows: "lr", extra: [[82, -9], [82, 19], [83, 31]] },
    { x: 368, w: 123, name: "I Try Pre-Ma", lane: 0, dots: true },
    { x: 845, w: 75, name: "Ooh B", lane: 0, dots: true },
    { x: 1037, w: 109, name: "Born To Be", lane: 0, dots: true },
    { x: 1272, w: 111, name: "I'm Losin' Y", lane: 0, dots: true },
    { x: 1707, w: 34, name: "", lane: 0 },
    { x: 84, w: 114, name: "Groovin' Is", lane: 1, dots: true, arrows: "r" },
    { x: 284, w: 84, name: "Ain't No", lane: 1, dots: true, arrows: "lr" },
    { x: 491, w: 354, name: "Light My Fire Pre-Master 1", lane: 1, shape: "light", arrows: "r" },
    { x: 920, w: 117, name: "Let Me Stand", lane: 1, dots: true, sel: true, arrows: "lr" },
    { x: 1146, w: 42, name: "", lane: 1, arrows: "lr" },
    { x: 1188, w: 84, name: "But It's", lane: 1, dots: true, arrows: "r", extra: [[78, 22], [78, 12]] },
    { x: 1383, w: 177, name: "In-A-Gadda-Da-Vida", lane: 1, shape: "slowIn", dots: true, arrows: "r" },
    { x: 1560, w: 147, name: "In-A-Gadda-Da", lane: 1, shape: "out", dots: true, arrows: "l", extra: [[144, 13]] },
]

const gain = (shape: string | undefined, i: number, w: number) => {
    const tail = Math.min(1, (w - i) / 5 + 0.3)
    if (shape === "in") return Math.min(1, 0.45 + i / 34) * tail
    if (shape === "slowIn") return i < 10 ? 0.3 + (i % 5) * 0.08 : 1.14
    if (shape === "out") return i > w - 8 ? 0.4 : 1.14
    if (shape === "light") {
        if (i < 142) return 0.92 - 0.16 * Math.exp(-((i - 92) ** 2) / 500) - (i < 4 ? 0.25 : 0)
        return 1.16 * tail
    }
    return tail
}

// closed outline of one channel, one sample for each pixel column
const outline = (seed: number, shape: string | undefined, w: number, mid: number, half: number, base: number, rough: number) => {
    let s = seed * 7919 + 13
    const rnd = () => {
        s = (s * 1103515245 + 12345) % 2147483648
        return s / 2147483648
    }
    const top: string[] = []
    const bottom: string[] = []
    for (let i = 0; i <= w; i++) {
        const swell = Math.sin(i / 9 + seed) * 0.04 + Math.sin(i / 3.7) * 0.03
        const up = Math.min(1, (base + swell + rnd() ** 3 * rough) * gain(shape, i, w))
        const down = Math.min(1, (base + swell + rnd() ** 3 * rough) * gain(shape, i, w))
        top.push(`${i},${(mid - half * up).toFixed(1)}`)
        bottom.unshift(`${i},${(mid + half * down).toFixed(1)}`)
    }
    return `M${top.join("L")}L${bottom.join("L")}Z`
}

const Clip = ({ c, seed }: { c: ClipT, seed: number }) => {
    const y = c.lane ? 365 : 42
    const h = c.lane ? 318 : 323
    const mid = y + h / 2
    const q = h / 4
    const dot = c.sel ? "#00e400" : "#c4f5c0"
    return (
        <g transform={`translate(${c.x} 0)`}>
            <clipPath id={`clip${seed}`}><rect x="0" y={y} width={c.w - 5} height={h} /></clipPath>
            <rect x="0" y={y} width={c.w} height={h} fill="#dcdcdc" />
            {[y + q, mid + q].map((m, i) => (
                <g key={m}>
                    <path d={outline(seed + i * 31, c.shape, c.w, m, q, 0.68, 0.38)} fill="#1c4d4e" />
                    <path d={outline(seed + i * 57 + 5, c.shape, c.w, m, q, 0.64, 0.3)} fill="#186165" />
                </g>
            ))}
            <path d={`M0 ${y + 12}H${c.w}M0 ${mid - 13}H${c.w}M0 ${mid + 12}H${c.w}M0 ${y + h - 13}H${c.w}`} stroke="#333" strokeDasharray="3 2" />
            <path d={`M0 ${mid}H${c.w}`} stroke="#111" strokeWidth={c.dots ? 2 : 1} />
            {c.arrows?.includes("l") && <path d={`M10 ${y + 2}v12l-7-6z`} fill="#b40f0f" />}
            {c.arrows?.includes("r") && <path d={`M${c.w - 10} ${y + 2}v12l7-6z`} fill="#b40f0f" />}
            {c.extra?.map(([dx, dy]) => <circle key={dy} cx={dx} cy={mid + dy} r="5.500" fill="#eee" stroke="#111" strokeWidth="1.500" />)}
            {c.dots && <g fill={dot} stroke="#111" strokeWidth="1.500"><circle cx="6" cy={mid} r="5.500" /><circle cx={c.w - 6} cy={mid} r="5.500" /></g>}
            {c.shape === "light" && (
                <g stroke="#111" strokeWidth="1.500" fill="#f4f4f4">
                    <path d={`M6 ${mid + 16}H73L86 ${mid + 12}L102 ${mid + 9}H138L143 ${mid}H350`} fill="none" />
                    <circle cx="6" cy={mid + 16} r="5.500" fill={dot} /><circle cx="73" cy={mid + 16} r="5.500" /><circle cx="86" cy={mid + 12} r="5.500" /><circle cx="102" cy={mid + 9} r="5.500" /><circle cx="138" cy={mid + 8} r="5.500" /><circle cx="143" cy={mid} r="5.500" /><circle cx="348" cy={mid} r="5.500" fill={dot} />
                </g>
            )}
            {c.sel && <rect x="2" y={y + h - 18} width={c.w - 7} height="18" fill="#154a96" />}
            <g clipPath={`url(#clip${seed})`}>
                {c.w > 40 && (
                    <g transform={`translate(7 ${y + h - 24})`} fill={c.sel ? "#fff" : "#0a0a0a"} stroke={c.sel ? "#fff" : "#0a0a0a"}>
                        {!c.sel && <g><path d="M2 7h11v8H2z" /><path d="M4 7V4c0-5 7-5 7 0v3M0 19h15M12 16l4 3-4 3" fill="none" strokeWidth="2" /></g>}
                        {c.sel && <path d="M-5 15h5M10 15h6M0 11h10v8H0z" fill="none" strokeWidth="2.500" />}
                    </g>
                )}
                {c.shape === "light" && <path d={`M50 ${y + h - 14}v14l-6-7zM52 ${y + h - 15}l7 8-7 8M70 ${y + h - 9}h6M85 ${y + h - 9}h6M76 ${y + h - 13}h9v8h-9z`} fill="none" stroke="#0a0a0a" strokeWidth="2.500" />}
                <text x={c.shape === "light" ? 96 : 27} y={y + h - 4} fontSize="15" fontWeight="500" fill="#fff" stroke="#2a5a5c" strokeOpacity=".6" strokeWidth="2" paintOrder="stroke">{c.name}</text>
            </g>
            {c.w === 34 && <path d={`M0 ${y + h - 12}h5M13 ${y + h - 12}h5M27 ${y + h - 12}h7M5 ${y + h - 16}h8v8h-8zM18 ${y + h - 16}h9v8h-9z`} fill="none" stroke="#0a0a0a" strokeWidth="2" />}
            <path d={`M${c.w - 1} ${y + h - 12}h-4v12h4M1 ${y + h - 12}h4v12H1`} stroke="#111" fill="none" strokeWidth="1.500" />
            <path d={`M0 ${y}v${h}M${c.w} ${y}v${h}`} stroke="#1414c8" strokeWidth="2" />
            <path d={`M${c.w} ${y}v${h}`} stroke="#8c8cf0" strokeDasharray="2 3" />
        </g>
    )
}

const markers: [number, string][] = [[1, "Love Is a Beautiful Thing"], [84, "Groovin' Is Easy"], [198, "Gimme Some Lovin"], [284, "It Ain't Necessarily So"], [1707, "Heat Wave"]]

const Timeline = () => (
    <svg viewBox="0 0 1865 683" className="w-full bg-[#555]" fontSize="15">
        <defs>
            <linearGradient id="lane" x1="0" y1="0" x2="0" y2="1"><stop offset="0" stopColor="#5e5e5e" /><stop offset="1" stopColor="#505050" /></linearGradient>
        </defs>
        <rect y="0" width="1865" height="19" fill="#262626" />
        <rect y="19" width="1742" height="23" fill="#454545" />
        <rect x="1742" y="19" width="123" height="23" fill="#272727" />
        <rect y="42" width="1865" height="323" fill="url(#lane)" />
        <rect y="365" width="1865" height="318" fill="url(#lane)" />
        {Array.from({ length: 62 }, (_, i) => {
            const x = 1 + i * 30.43
            return <line key={i} x1={x} x2={x} y1={i % 10 === 0 ? 19 : i % 5 === 0 ? 33 : 37} y2="42" stroke="#dcdcdc" strokeWidth="1.200" />
        })}
        <g fill="#dcdcdc" fontSize="14"><text x="5" y="32">0</text><text x="309" y="32">10 mn</text><text x="1832" y="32">1 h</text></g>
        {clips.map((c, i) => <Clip key={i} c={c} seed={i + 1} />)}
        <path d="M1721 42v323" stroke="#111180" strokeDasharray="3 2" strokeWidth="1.500" />
        {[1, 84, 198, 284, 368, 491, 845, 920, 1037, 1146, 1188, 1272, 1383, 1707, 1742].map((x) => (
            <line key={x} x1={x} x2={x} y1="19" y2="683" stroke="#2222d0" strokeWidth="1.500" />
        ))}
        {markers.map(([x, name]) => (
            <g key={x}>
                <path d={x === 1 ? "M1 2l9 9-9 9z" : `M${x} 2l9 9-9 9-9-9z`} fill="#e83434" />
                <text x={x === 1 ? 16 : x + 11} y="13" fill="#dcdcdc" fontSize="14"><tspan fill="#5ab4ee">[</tspan>{name}</text>
            </g>
        ))}
        <path d="M1742 2v18l-8-9z" fill="#e83434" />
    </svg>
)

const TrackHead = () => (
    <div className="flex w-[225px] shrink-0 flex-col bg-[#484848]">
        <div className="flex h-[42px] items-center bg-[#252525] px-2 text-[#e0e0e0]">
            <Ic n="plus" className="size-5" />
            <svg viewBox="0 0 24 24" className="ml-auto size-[26px]" stroke="currentColor" fill="currentColor"><path d="M1 2h22M1 22h22" strokeDasharray="2 2" /><path d="M1 6l6 6-6 6zM23 6l-6 6 6 6z" stroke="none" /></svg>
            <svg viewBox="0 0 24 24" className="ml-2 size-[25px]" stroke="currentColor" fill="none" strokeWidth="2"><path d="M1 1h22v22H1z" /><path d="M4 8h9M10 14h9" strokeWidth="4" /></svg>
        </div>
        <div className="flex flex-1">
            <div className="flex w-[26px] flex-col items-center bg-[#757575]">
                <span className="flex h-[26px] w-full items-center justify-center bg-[#9fc8e8]">
                    <svg viewBox="0 0 24 24" className="size-6"><circle cx="8" cy="12" r="6" fill="none" stroke="#000" strokeWidth="1.500" /><circle cx="16" cy="12" r="7" /></svg>
                </span>
                <Ic n="unlock" className="mt-1 size-[22px] text-[#333]" />
                <span className="mt-[289px] size-[15px] rounded-full border-2 border-[#1a1ae8] bg-[#8a8af8]" />
            </div>
            <div className="flex flex-1 flex-col">
                <div className="flex">
                    <div className="w-[173px]">
                        <h3 className="h-[26px] bg-[#757575] pl-1.5 leading-[26px] font-semibold text-black">Track 1</h3>
                        <div className="flex justify-between pt-1.5 pr-6 pl-1.5 font-bold text-[#dadada]">
                            <Btn className="h-[24px] w-[92px] gap-8 rounded-sm bg-[#555]"><span>M</span><span>S</span></Btn>
                            <Btn label="Track effects" className="h-[24px] w-[29px] rounded-sm bg-[#555]"><Ic n="fxChain" className="size-6" /></Btn>
                        </div>
                        <div className="flex justify-between pt-1 pr-6 pl-1.5 text-[#dadada]">
                            <Btn label="Routing" className="h-[24px] w-[46px] rounded-sm bg-[#555]"><Ic n="weave" className="size-[18px]" /></Btn>
                            <Btn label="Record and monitor" className="h-[24px] w-[94px] justify-between rounded-sm bg-[#555] pr-0.5 pl-1.5"><Ic n="rec" className="size-[18px]" /><Corner /><Ic n="horn" className="size-4" /><Corner /></Btn>
                        </div>
                    </div>
                    <span className="flex-1 bg-[#343434] pt-0.5 text-center text-[#c8c8c8]">1</span>
                </div>
                <div className="flex h-[240px]">
                    <div className="flex-1" />
                    <div className="flex w-[44px] flex-col items-start bg-[#343434] pt-[64px] pl-1.5 text-white"><LaneButtons /></div>
                </div>
                <div className="flex flex-1">
                    <div className="flex flex-1 flex-col items-end pt-[133px] pr-1.5 text-white"><LaneButtons /></div>
                    <div className="w-[15px] bg-[#343434]" />
                </div>
            </div>
        </div>
    </div>
)

const LaneButtons = () => (
    <div className="flex w-4 flex-col items-center text-[16px] leading-6 font-bold">
        <svg viewBox="0 0 13 8" className="mb-2 h-2 w-[13px]" fill="#dcdcdc" aria-hidden="true"><path d="M0 0h13L6.500 8z" /></svg>
        <button type="button">M</button>
        <button type="button">S</button>
    </div>
)

const Montage = () => (
    <section className="flex flex-col border-2 border-[#555] bg-[#454545] px-2 pb-[7px]">
        <header className="flex h-[39px] items-center gap-1.5 pb-1.5 text-[#dcdcdc]">
            <Blips className="-ml-2 size-[25px]" />
            <h2 className="text-[#62b6ea]"><b className="font-semibold">AUDIO</b>MONTAGE</h2>
            <div className="ml-auto flex items-center gap-2.5">
                <Ic n="filePlus" className="size-[22px]" />
                <Ic n="folder" className="size-[24px]" />
                <span className="h-[26px] w-px bg-[#6a6a6a]" />
                <Ic n="save" className="ml-1 size-[20px] text-[#8a8a8a]" />
                <Ic n="saveAs" className="ml-1 size-[24px]" />
                <span className="h-[26px] w-px bg-[#6a6a6a]" />
                <Ic n="snap" className="size-[20px] text-[#6a6a6a]" />
                <span className="ml-1 h-[26px] w-px bg-[#6a6a6a]" />
                <Ic n="undo2" className="size-[22px] text-[#6a6a6a]" />
                <Ic n="redo2" className="size-[22px] text-[#6a6a6a]" />
                <span className="ml-1 h-[26px] w-px bg-[#6a6a6a]" />
                <Ic n="back" className="size-[24px]" />
                <Ic n="arrow" className="-ml-1 size-[24px] text-[#6a6a6a]" />
                <div className="relative -ml-1 h-[25px] w-[143px] border-2 border-black bg-[#383838]">
                    <select aria-label="History" className="h-full w-full appearance-none"><option></option></select>
                    <svg viewBox="0 0 12 12" className="pointer-events-none absolute top-1.5 right-1.5 size-[11px]" fill="currentColor"><path d="M0 1h12L6 12z" /></svg>
                </div>
                <span className="-ml-1 h-[26px] w-px bg-[#6a6a6a]" />
                <Ic n="downBar" className="-ml-1 size-4" />
                <Ic n="win" className="ml-3 size-[15px]" />
                <Ic n="layout" className="mr-3 ml-2 size-4" />
            </div>
        </header>

        <div className="flex h-[36px] items-end border-t-2 border-[#1e1e1e] bg-[#2b2b2b] text-[#e0e0e0]">
            {ribbonTabs.map((t) => (
                <button key={t.n} type="button" className={clsx("flex h-[34px] shrink-0 items-center justify-center gap-2 font-semibold", t.w, t.on ? "rounded-t bg-[#505050] text-white" : "border-r border-[#1a1a1a]")}>
                    <RibbonIcon n={t.icon} />
                    {t.n}
                </button>
            ))}
            <svg viewBox="0 0 12 12" className="mr-3 ml-auto size-3 self-center" fill="none" stroke="currentColor" strokeWidth="3"><path d="M1 9l5-6 5 6" /></svg>
        </div>
        <div className="flex h-[150px] bg-gradient-to-b from-[#545454] to-[#454545] text-[#d4d4d4]">
            <Group name="LOUDNESS" className="w-[106px]">
                <Ic n="meta" className="size-[48px]" />
                <span className="mb-3 text-center leading-[20px]">Meta<br />Normalizer</span>
            </Group>
            <Group name="PROCESS" className="w-[219px]">
                <div className="mb-2 flex w-full flex-col gap-[11px] pl-3">
                    <span className="flex items-center gap-1"><Ic n="clock" className="size-6" />Time-Stretch to Cursor</span>
                    <span className="flex items-center gap-1">
                        <svg viewBox="0 0 24 24" className="size-6" fill="none" strokeWidth="2.500"><path d="M2 20C5 20 4 3 7 3s2 17 4 17 3-14 4-14" stroke="#fff" /><path d="M14 20c2 0 2-12 3-12s1 12 2 12 1-16 3-16" stroke="#5ab4ee" /></svg>
                        Pitch Shifting<span className="mr-3 ml-auto text-[10px] text-[#8a8a8a]">▼</span>
                    </span>
                    <label className="flex items-center gap-2">
                        <Check />
                        <svg viewBox="0 0 24 24" className="size-[25px]" fill="none" strokeWidth="3"><path d="M2 12V8c0-8 9-8 9 0v5M7 14l4 4 4-4" stroke="#5ab4ee" /><path d="M12 18c1 6 10 6 10-2v-5" stroke="#fff" /></svg>
                        <span className="-ml-1">Invert Phase</span>
                    </label>
                </div>
            </Group>
            <Group name="SPLIT" className="w-[76px]">
                <svg viewBox="0 0 48 24" className="h-6 w-12" strokeWidth="3" fill="none"><path d="M18 1v22M16 12H8M12 6l-9 6 9 6z" stroke="#fff" fill="#fff" /><path d="M30 1v22M31 12h10M37 6l8 6-8 6z" stroke="#5ab4ee" fill="#5ab4ee" /></svg>
                <span className="mt-[18px] text-center leading-[20px]">Auto<br />Split</span>
            </Group>
            <Group name="SELECTED CLIPS" className="w-[119px]">
                <svg viewBox="0 0 50 38" className="h-[38px] w-[50px]"><path d="M4 2h12v29H4zM18 2h12v29H18z" fill="#5ab4ee" /><path d="M36 2h12v29H36z" fill="#fff" /><path d="M4 16l2-5 2 3 2-6 2 8 2-4 2 5-2 4-2-3-2 6-2-5-2 4zM18 16l2-5 2 3 2-6 2 8 2-4 2 5-2 4-2-3-2 6-2-5-2 4zM36 16l2-5 2 3 2-6 2 8 2-4 2 5-2 4-2-3-2 6-2-5-2 4z" fill="#34586e" /><path d="M2 29v7h30v-7" fill="none" stroke="#fff" strokeWidth="3" /></svg>
                <span className="mt-4 mb-4">Bounce</span>
            </Group>
            <Group name="SUPERCLIP" className="w-[107px]">
                <Ic n="tagClip" className="size-[42px]" />
                <span className="mt-1 mb-2 text-center leading-[20px]">Create<br />Superclip</span>
            </Group>
            <Blips className="mt-9 mr-3 ml-auto size-[76px]" />
        </div>

        <div className="flex h-[47px] items-end border-b-4 border-[#747474] bg-[#262626]">
            <button type="button" className="flex h-[41px] w-[176px] items-center gap-3 rounded-t bg-[#747474] px-2.5 font-semibold text-white"><Blips className="size-[25px]" />File Group 1</button>
            <span className="mb-3 ml-4 flex items-center gap-3 text-[#e4e4e4]"><Ic n="plus" /><span className="text-[9px]">▼</span></span>
        </div>

        <div className="flex flex-col border-2 border-t-0 border-[#5c5c5c] px-[5px] pb-1">
            <div className="flex h-[44px] items-center">
                <button type="button" className="flex h-[31px] w-[203px] items-center gap-3 rounded border-2 border-[#2b2b2b] bg-[#606060] px-2 font-semibold text-white"><Blips className="size-[24px]" />TSALW Master 7</button>
                <span className="ml-auto flex items-center gap-4 pr-1 text-[#d2d2d2]"><input type="checkbox" aria-label="Pin" className="size-5 appearance-none border border-[#46606b]" /><Ic n="layout" className="size-4" /></span>
            </div>
            <div className="flex border-t border-[#6a6a6a]">
                <TrackHead />
                <div className="min-w-0 flex-1"><Timeline /></div>
                <div className="flex w-[21px] shrink-0 flex-col items-center bg-[#343434] text-[#d0d0d0]">
                    <span className="text-[9px] text-[#888]">▲</span>
                    <span className="w-full flex-1 border border-[#222] bg-[#5a5e60]" />
                    <span className="py-1 text-[9px] text-[#888]">▼</span>
                    <Ic n="search" className="mt-2 size-[15px]" />
                    <Ic n="search" className="mt-5 size-[15px]" />
                    <span className="mt-3 mb-1 h-[98px] w-[13px] bg-[repeating-linear-gradient(180deg,#4a4a4a_0_6px,#262626_6px_8px)]" />
                </div>
            </div>
            <div className="flex h-[19px] items-center border-y border-[#1e1e1e] bg-[#3c3c3c] text-[9px] text-[#999]">
                <span className="w-[20px] text-center">◀</span>
                <span className="h-full flex-1 border-x border-[#222] bg-[#5a5e60]" />
                <span className="w-[20px] text-center">▶</span>
                <svg viewBox="0 0 84 18" className="h-[18px] w-[84px]" fill="none" stroke="#c8c8c8" strokeWidth="1.500"><path d="M6 5v8M9 5v8M12 5h6v8h-6zM21 5v8M24 5v8M35 5v8M39 5h7v8h-7zM50 5v8M64 5h14v8H64z" /></svg>
                <span className="mr-3 h-[13px] w-[98px] bg-[repeating-linear-gradient(90deg,#4a4a4a_0_6px,#262626_6px_8px)]" />
            </div>
            <div className="flex h-[35px] items-center justify-end gap-[2px] bg-[#262626] pr-1 text-[#d0d0d0]">
                <span className="flex h-6 w-[184px] items-center justify-between bg-[#505050] px-1.5"><svg viewBox="0 0 24 24" className="size-6"><path d="M2 8l5 4-5 4zM22 8l-5 4 5 4z" stroke="#5ab4ee" strokeWidth="3" fill="#5ab4ee" /><path d="M8 2h8M8 22h8M12 2v20" stroke="#fff" strokeWidth="3" /></svg>31 mn 58 s 386 ms</span>
                <span className="flex h-6 w-[184px] items-center justify-between bg-[#505050] px-1.5"><Ic n="tagClip" className="size-6" />3 mn 51 s 793 ms</span>
                <span className="flex h-6 w-[131px] items-center justify-between bg-[#505050] px-1.5"><Ic n="search" className="size-[18px]" />x 1: 136824</span>
                <span className="flex h-6 w-[168px] items-center justify-between bg-[#505050] px-1.5"><Ic n="info" className="size-[22px]" />Stereo 48 000 Hz</span>
                <span className="ml-2 flex h-6 w-[52px] items-center justify-around bg-[#505050]"><Ic n="starOff" className="size-[17px]" /><Ic n="star" className="size-[17px]" /></span>
            </div>
        </div>
    </section>
)

const transport: [string, string][] = [["first", "w-[36px]"], ["last", "w-[35px]"], ["rewind", "w-[55px]"], ["forward", "w-[55px]"], ["loop", "w-[55px]"], ["stop", "w-[55px]"], ["play", "w-[55px]"], ["rec", "w-[55px]"]]

const Transport = () => (
    <footer className="flex flex-1 items-center justify-center border border-[#555] bg-[#454545] pb-2 pl-14">
        <span className="mr-3 text-[22px] leading-none text-[#dcdcdc]">«</span>
        <div className="flex h-[35px] overflow-hidden rounded-sm bg-[#222]">
            {transport.map(([n, w]) => (
                <button key={n} type="button" aria-label={n} className={clsx("flex items-center justify-center border border-[#222] bg-gradient-to-b from-[#d0d4dc] to-[#b4b9c2] text-black", w)}><Ic n={n} className="size-[19px]" /></button>
            ))}
        </div>
        <output className="ml-4 h-[35px] w-[310px] rounded bg-[#0b1116] text-center text-[24px] leading-[34px] font-medium text-[#e4e4e4]">00 h 31 mn 58 s 386 ms</output>
        <span className="ml-[14px] h-[35px] w-[206px] rounded bg-[#0b1116]" />
    </footer>
)

/* ---------- dialog ---------- */

type GroupBox = { title: string, mode: string, ref: string, peaks: string, lufs: string, w: string, spin: string, off?: boolean, icon?: string, focus?: boolean }

const boxes: GroupBox[] = [
    { title: "Clips", mode: "Match Specific Loudness", ref: "Reference: Top of Loudness Range", peaks: "Ignore Peaks", lufs: "−16.00 LUFS", w: "w-[372px]", spin: "w-[168px]", focus: true },
    { title: "Audio Montage Output", mode: "Do Not Change Loudness", ref: "Reference: Loudness of Audio Montage Mixdown", peaks: "Limit True Peaks", lufs: "−23.00 LUFS", w: "w-[410px]", spin: "w-[187px]", off: true, icon: "drop" },
    { title: "Master Section Output", mode: "Do Not Change Loudness", ref: "Reference: Loudness of Final Mixdown", peaks: "Ignore Peaks", lufs: "−23.00 LUFS", w: "w-[372px]", spin: "w-[167px]", off: true },
]

const Dialog = () => (
    <div role="dialog" aria-labelledby="dlg-title" className="absolute top-[529px] left-1/2 w-[1270px] -translate-x-1/2 overflow-hidden rounded-2xl bg-[#434343] text-[#e0e0e0] shadow-[0_18px_50px_rgba(0,0,0,0.55)] outline outline-[#555]">
        <div className="flex h-[41px] items-center bg-[#f1f0f5] px-3">
            <div className="flex w-20 gap-[11px]">
                <span className="size-[18px] rounded-full bg-[#ec6358]" />
                <span className="size-[18px] rounded-full border border-[#c4c4c8] bg-[#d6d6da]" />
                <span className="size-[18px] rounded-full border border-[#c4c4c8] bg-[#d6d6da]" />
            </div>
            <h1 id="dlg-title" className="flex-1 pr-20 text-center font-['Inter',sans-serif] text-[19px] font-semibold text-[#3e3e42]">Loudness Meta Normalizer</h1>
        </div>
        <svg viewBox="0 0 24 24" className="absolute top-[43px] right-1 size-6" fill="#e0e0e0"><path d="M1 1l4 14 3-4 4 5 2-2-4-5 5-1z" /><text x="12" y="23" fontSize="17" fontWeight="bold">?</text></svg>
        <form className="px-4 pt-3 pb-4" onSubmit={(e) => e.preventDefault()}>
            <div className="flex justify-between">
                {boxes.map((b, i) => (
                    <div key={b.title} className="contents">
                        {i > 0 && <span className="mt-[113px] text-[#141414]"><Ic n="arrow" className="size-6" /></span>}
                        <fieldset className={clsx("self-start rounded-md border border-[#222] px-[13px] pb-[11px]", b.w)}>
                            <legend className="ml-1 h-7 px-0.5">
                                <label className="flex h-7 items-center gap-0.5">
                                    <Check checked={b.focus} />
                                    <span className={clsx("px-1", b.focus && "border border-dotted border-[#101050]")}>{b.title}</span>
                                </label>
                            </legend>
                            <div className="flex flex-col gap-2.5 pt-2.5">
                                <Pick value={b.mode} label={`${b.title} mode`} off={b.off} />
                                <div className={clsx("flex items-center justify-end gap-2.5", b.off && "text-[#8a8a8a]")}>Loudness<Spin value={b.lufs} label={`${b.title} loudness`} off={b.off} className={b.spin} /></div>
                                <Pick value={b.ref} label={`${b.title} reference`} off={b.off} />
                                <Pick value={b.peaks} label={`${b.title} peaks`} off={b.off} icon={b.icon} />
                                <div className="flex items-center justify-end gap-2.5 text-[#8a8a8a]">Maximum Peak<Spin value="0.00 dB" label={`${b.title} maximum peak`} off className={b.spin} /></div>
                                {i === 0 && <CheckLabel text="Force Equal Loudness" off className="ml-1.5" />}
                            </div>
                        </fieldset>
                    </div>
                ))}
            </div>
            <div className="flex items-center pt-3.5 pl-1.5">
                <div className="flex w-[401px] flex-col gap-3">
                    <CheckLabel text="Change Pre-Gain (Exclude Audio Montage Effects)" checked />
                    <CheckLabel text="Only Selected Clips" />
                </div>
                <div className="flex w-[112px] flex-col gap-3">
                    <CheckLabel text="Show Log" />
                    <CheckLabel text="Test Only" />
                </div>
                <div className="mt-5 flex flex-1 items-center">
                    <div className="flex h-[32px] flex-1 items-center border-2 border-[#141414] bg-[#383838] pr-1">
                        <input aria-label="Preset name" defaultValue="Untitled" className="w-0 flex-1 bg-transparent px-1" />
                        <Ic n="page" className="size-[22px]" />
                    </div>
                    <Btn className="ml-[9px] h-[35px] w-[116px] gap-2 rounded-sm border-2 border-[#2b6288]"><Gears className="size-6" />Apply</Btn>
                    <Btn className="ml-[10px] h-[35px] w-[114px] gap-2 rounded-sm"><Ic n="cross" className="size-[18px]" />Cancel</Btn>
                </div>
            </div>
        </form>
    </div>
)

/* ---------- window ---------- */

const Rail = () => (
    <aside className="flex w-[32px] shrink-0 flex-col bg-[#333] text-[#dadada]">
        <button type="button" className="flex h-[115px] flex-col items-center justify-end gap-1 border-b border-[#1e1e1e] pb-1.5">
            <span className="rotate-180 text-[14px] [writing-mode:vertical-rl]"><b className="font-semibold">BIT</b>METER</span>
            <Ic n="grid" className="size-[25px]" />
        </button>
        <button type="button" className="flex h-[115px] flex-col items-center justify-end gap-1.5 border-b border-[#1e1e1e] pb-1.5 text-[#858585]">
            <span className="rotate-180 text-[14px] [writing-mode:vertical-rl]">PLUG-INS</span>
            <svg viewBox="0 0 24 24" className="size-6" stroke="currentColor" strokeWidth="2" fill="none"><path d="M2 7v10M22 7v10M7 7h10v10H7zM7 10h10M7 13h10M5 3h14M5 21h14" /></svg>
        </button>
    </aside>
)

export default function App() {
    return (
        <main className="relative flex min-h-screen flex-col bg-[#1c1c1c] font-['Noto_Sans','Open_Sans',sans-serif] text-[15px] leading-5 text-[#d4d4d4]">
            <div className="flex h-[41px] shrink-0 items-center rounded-t-xl bg-[#f4f3f8] px-3">
                <div className="flex w-20 gap-[11px]">
                    {[0, 1, 2].map((i) => <span key={i} className="size-[18px] rounded-full border border-[#c4c4c8] bg-[#d6d6da]" />)}
                </div>
                <h1 className="flex-1 pr-20 text-center font-['Inter',sans-serif] text-[19px] font-semibold text-[#3e3e42]">
                    WaveLab Pro 11 - [TSALW Master 7.mon (/Users/yorshoff/Documents/WaveLab Projects/TSALW/mix)]
                </h1>
            </div>
            <div className="flex flex-1 gap-[3px] pt-[5px] pr-[5px] pb-[5px] pl-1.5">
                <Rail />
                <div className="flex min-w-0 flex-1 flex-col gap-[6px]">
                    <div className="flex gap-[5px]">
                        <section className="flex min-w-0 flex-[878] flex-col border border-[#555] bg-[#454545]">
                            <Tabs tabs={leftTabs} />
                            <div className="flex h-[40px] items-center px-[2px] text-[#dcdcdc]">
                                <Btn className="h-[31px] w-[87px] rounded-sm">Functions</Btn>
                                <Btn label="Settings" className="ml-2 h-[31px] w-[63px] gap-3 rounded-sm"><Ic n="check" className="size-[22px]" /><Ic n="rotate" /></Btn>
                                <Btn label="Presets" className="ml-2.5 h-[31px] w-[160px] justify-around border-[#3c3c3c] bg-[#4b4b4b] text-[20px] text-[#6e6e6e]"><span>①</span><span>②</span><span>③</span><span>④</span><span>⑤</span></Btn>
                                <Btn label="Reset" className="h-[31px] w-[31px]"><Ic n="toStart" /></Btn>
                            </div>
                            <div className="px-[2px] pb-[2px]"><LoudnessGraph /></div>
                        </section>
                        <Inspector />
                        <PhaseScope />
                    </div>
                    <div className="flex flex-1 gap-[4px]">
                        <div className="flex min-w-0 flex-1 flex-col gap-[2px]">
                            <Montage />
                            <Transport />
                        </div>
                        <MasterSection />
                    </div>
                </div>
            </div>
            <Dialog />
        </main>
    )
}
